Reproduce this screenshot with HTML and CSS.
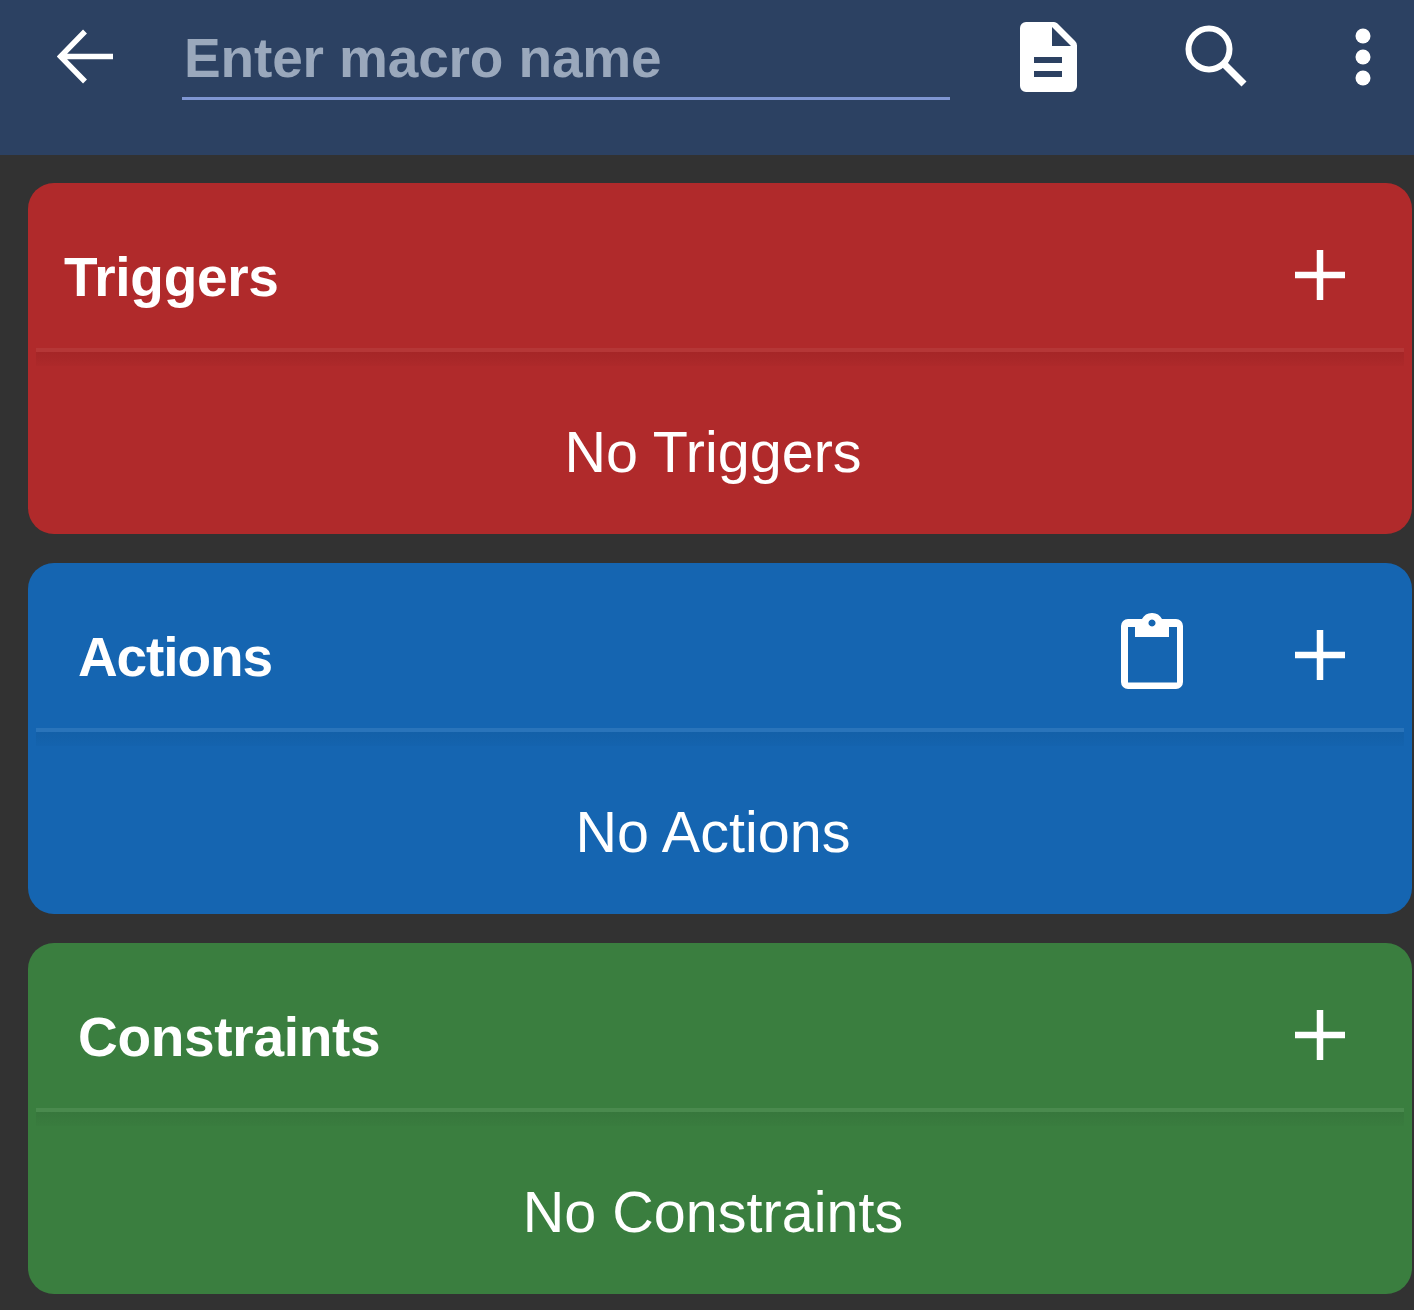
FILE: index.html
```html
<!DOCTYPE html>
<html lang="en">
<head>
<meta charset="utf-8">
<title>Macro editor</title>
<link rel="stylesheet" href="styles.css">
</head>
<body>
<header class="topbar">
  <svg class="icon-back" width="56" height="56" viewBox="0 0 56 56"><path d="M56 27.500H5M28 2.500 3.500 27.500l24.500 25" fill="none" stroke="#fff" stroke-width="5.500"/></svg>
  <div class="name-field"><span class="name-hint">Enter macro name</span></div>
  <svg class="icon-doc" width="57" height="70" viewBox="0 0 57 70"><path fill-rule="evenodd" d="M6 0h28a5 5 0 0 1 3.500 1.500L55 19a6 6 0 0 1 2 4.500V64a6 6 0 0 1-6 6H6a6 6 0 0 1-6-6V6a6 6 0 0 1 6-6zM32 5v19h19zM14 35v6h28v-6zM14 49v6h28v-6z" fill="#fff"/></svg>
  <svg class="icon-search" width="62" height="62" viewBox="0 0 62 62"><circle cx="24" cy="24" r="20.500" fill="none" stroke="#fff" stroke-width="6"/><path d="M38 38 59 59" fill="none" stroke="#fff" stroke-width="7"/></svg>
  <svg class="icon-more" width="16" height="58" viewBox="0 0 16 58"><circle cx="8" cy="8" r="7.500" fill="#fff"/><circle cx="8" cy="29" r="7.500" fill="#fff"/><circle cx="8" cy="50" r="7.500" fill="#fff"/></svg>
</header>
<main class="cards">
  <section class="card card-red">
    <div class="card-head head-triggers">
      <h2 class="card-title title-triggers">Triggers</h2>
      <svg class="icon-plus" width="50" height="50" viewBox="0 0 50 50"><path d="M25 0v50M0 25h50" stroke="#fff" stroke-width="6.500"/></svg>
    </div>
    <div class="divider"></div>
    <div class="card-body">No Triggers</div>
  </section>
  <section class="card card-blue">
    <div class="card-head">
      <h2 class="card-title title-actions">Actions</h2>
      <svg class="icon-clip" width="64" height="77" viewBox="0 0 64 77"><path fill-rule="evenodd" d="M8 6h14a11.330 11.330 0 0 1 20 0h14a7 7 0 0 1 7 7v56a7 7 0 0 1-7 7H8a7 7 0 0 1-7-7V13a7 7 0 0 1 7-7zM8 14v55.500h49V14h-8v10H15V14zM32 6.500a3.500 3.500 0 1 0 .01 0z" fill="#fff"/></svg>
      <svg class="icon-plus" width="50" height="50" viewBox="0 0 50 50"><path d="M25 0v50M0 25h50" stroke="#fff" stroke-width="6.500"/></svg>
    </div>
    <div class="divider"></div>
    <div class="card-body">No Actions</div>
  </section>
  <section class="card card-green">
    <div class="card-head">
      <h2 class="card-title">Constraints</h2>
      <svg class="icon-plus" width="50" height="50" viewBox="0 0 50 50"><path d="M25 0v50M0 25h50" stroke="#fff" stroke-width="6.500"/></svg>
    </div>
    <div class="divider"></div>
    <div class="card-body">No Constraints</div>
  </section>
</main>
</body>
</html>
```
FILE: styles.css
```css
* { box-sizing: border-box; }
html, body { margin: 0; height: 100%; }
body {
  background: #323232;
  font-family: "Liberation Sans", Arial, sans-serif;
  color: #fff;
  overflow: hidden;
}
.topbar {
  height: 155px;
  background: #2c4162;
  display: flex;
  align-items: flex-start;
}
.icon-back { margin: 29px 0 0 57px; flex: none; }
.name-field {
  margin: 0 0 0 69px;
  width: 768px;
  height: 100px;
  flex: none;
  border-bottom: 3px solid #7f96d2;
  padding: 25px 0 0 2px;
}
.name-hint {
  display: block;
  font-size: 55px;
  line-height: 66px;
  font-weight: 700;
  letter-spacing: -0.15px;
  color: #9aa8bc;
}
.icon-doc { margin: 22px 0 0 70px; flex: none; }
.icon-search { margin: 25px 0 0 108px; flex: none; }
.icon-more { margin: 28px 0 0 108px; flex: none; }
.cards {
  padding: 28px 2px 0 28px;
  display: flex;
  flex-direction: column;
  gap: 29px;
}
.card {
  height: 351px;
  border-radius: 26px;
  display: flex;
  flex-direction: column;
}
.card-red { background: #b02a2b; --line: #b53737; --shade: #a52627; --shade-end: #ad292a; }
.card-blue { background: #1565b1; --line: #2a74ba; --shade: #1360a8; --shade-end: #1463ae; }
.card-green { background: #3a7e3f; --line: #4a8a4e; --shade: #37773c; --shade-end: #397c3e; }
.card-head {
  height: 165px;
  flex: none;
  padding: 19px 67px 0 50px;
  display: flex;
  align-items: center;
}
.head-triggers { padding-left: 36px; }
.card-title {
  margin: 3px auto 0 0;
  font-size: 55px;
  line-height: 66px;
  font-weight: 700;
  letter-spacing: -0.3px;
}
.title-actions { letter-spacing: -1.1px; }
.icon-clip { margin: -7px 111px 0 0; flex: none; }
.icon-plus { flex: none; }
.divider {
  flex: none;
  height: 18px;
  margin: 0 8px;
  border-top: 4px solid var(--line);
  background: linear-gradient(var(--shade), var(--shade-end));
}
.card-body {
  flex: 1;
  display: flex;
  align-items: center;
  justify-content: center;
  padding: 3px 14px 0 0;
  font-size: 57.5px;
  line-height: 68px;
}
```
